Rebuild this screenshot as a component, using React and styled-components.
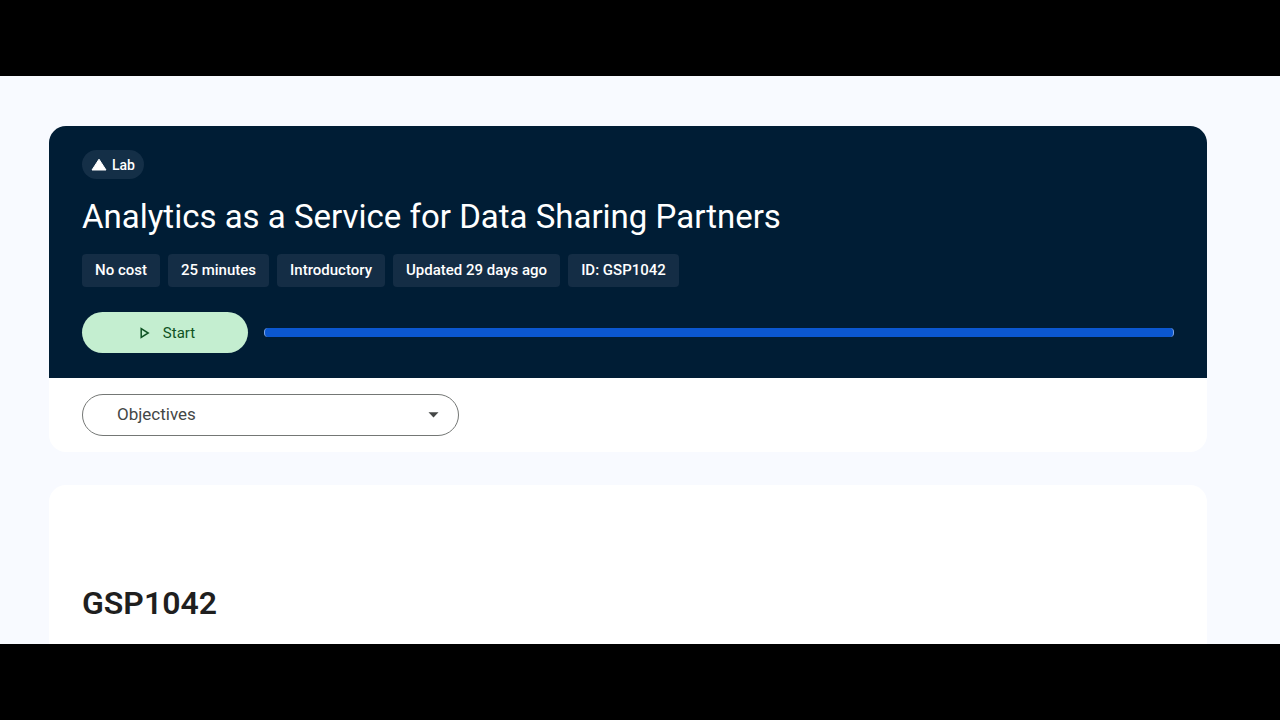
import React from 'react';
import styled, { createGlobalStyle } from 'styled-components';

const GlobalStyle = createGlobalStyle`
  * {
    box-sizing: border-box;
  }

  body {
    margin: 0;
    background: #000;
    font-family: 'Google Sans', Roboto, 'Liberation Sans', sans-serif;
  }
`;

const Frame = styled.div`
  display: flex;
  height: 100vh;
  padding: 76px 0;
  background: #000;
`;

const Page = styled.main`
  flex: 1;
  overflow: hidden;
  padding: 50px 73px 0 49px;
  background: #f8faff;
`;

const Card = styled.section`
  margin-bottom: 33px;
  border-radius: 17px;
  overflow: hidden;
  background: #fff;
`;

const Header = styled.header`
  display: flex;
  flex-direction: column;
  align-items: flex-start;
  padding: 24px 33px 25px;
  background: #001d35;
  color: #fff;
`;

const LabBadge = styled.span`
  display: flex;
  align-items: center;
  gap: 5px;
  height: 29px;
  padding: 0 9px;
  border-radius: 15px;
  background: #142f47;
  font-size: 14px;
  font-weight: 500;
`;

const Title = styled.h1`
  margin: 17px 0 16px;
  font-size: 33px;
  font-weight: 400;
  line-height: 42px;
`;

const Chips = styled.ul`
  display: flex;
  flex-wrap: wrap;
  gap: 8px;
  margin: 0 0 25px;
  padding: 0;
  list-style: none;
`;

const Chip = styled.li`
  padding: 0 13px;
  border-radius: 4px;
  background: #142d45;
  font-size: 15px;
  font-weight: 500;
  line-height: 33px;
`;

const Controls = styled.div`
  display: flex;
  align-items: center;
  gap: 16px;
  width: 100%;
`;

const StartButton = styled.button`
  display: flex;
  align-items: center;
  justify-content: center;
  gap: 13px;
  width: 166px;
  height: 41px;
  padding: 0 0 0 5px;
  border: 0;
  border-radius: 21px;
  background: #c4eed0;
  color: #0f5223;
  font-family: inherit;
  font-size: 15px;
  font-weight: 400;
`;

const ProgressBar = styled.div`
  flex: 1;
  height: 9px;
  border: solid #7fa6e6;
  border-width: 0 1px;
  border-radius: 4px;
  background: #0b57d0;
`;

const Outline = styled.nav`
  padding: 16px 33px;
`;

const SelectField = styled.div`
  position: relative;
  width: 377px;
  max-width: 100%;
`;

const Select = styled.select`
  display: block;
  width: 100%;
  height: 42px;
  padding: 0 34px 2px;
  border: 1px solid #747775;
  border-radius: 21px;
  appearance: none;
  background: #fff;
  color: #444746;
  font-family: inherit;
  font-size: 17px;
`;

const Arrow = styled.svg`
  position: absolute;
  top: 18px;
  right: 20px;
  pointer-events: none;
`;

const LabBody = styled.article`
  padding: 97px 33px;
`;

const LabCode = styled.h2`
  margin: 0;
  color: #1f1f1f;
  font-size: 32px;
  font-weight: 600;
  line-height: 42px;
`;

const details = [
  'No cost',
  '25 minutes',
  'Introductory',
  'Updated 29 days ago',
  'ID: GSP1042',
];

const App = () => (
  <Frame>
    <GlobalStyle />
    <Page>
      <Card>
        <Header>
          <LabBadge>
            <svg width="16" height="13" viewBox="0 0 16 13" aria-hidden="true">
              <path
                d="M8 1.2L15 12H1Z"
                fill="#fff"
                stroke="#fff"
                strokeLinejoin="round"
              />
            </svg>
            Lab
          </LabBadge>
          <Title>Analytics as a Service for Data Sharing Partners</Title>
          <Chips>
            {details.map(item => (
              <Chip key={item}>{item}</Chip>
            ))}
          </Chips>
          <Controls>
            <StartButton type="button">
              <svg width="10" height="12" viewBox="0 0 10 12" aria-hidden="true">
                <path
                  d="M1.2 1.6V10.4L8.2 6Z"
                  fill="none"
                  stroke="currentColor"
                  strokeWidth="1.5"
                />
              </svg>
              Start
            </StartButton>
            <ProgressBar role="progressbar" aria-label="Lab progress" />
          </Controls>
        </Header>
        <Outline>
          <SelectField>
            <Select aria-label="Lab section" defaultValue="Objectives">
              <option>Objectives</option>
            </Select>
            <Arrow width="11" height="6" viewBox="0 0 11 6" aria-hidden="true">
              <path d="M0.5 0.3H10.5L5.5 5.6Z" fill="#444746" />
            </Arrow>
          </SelectField>
        </Outline>
      </Card>
      <Card>
        <LabBody>
          <LabCode>GSP1042</LabCode>
        </LabBody>
      </Card>
    </Page>
  </Frame>
);

export default App;
